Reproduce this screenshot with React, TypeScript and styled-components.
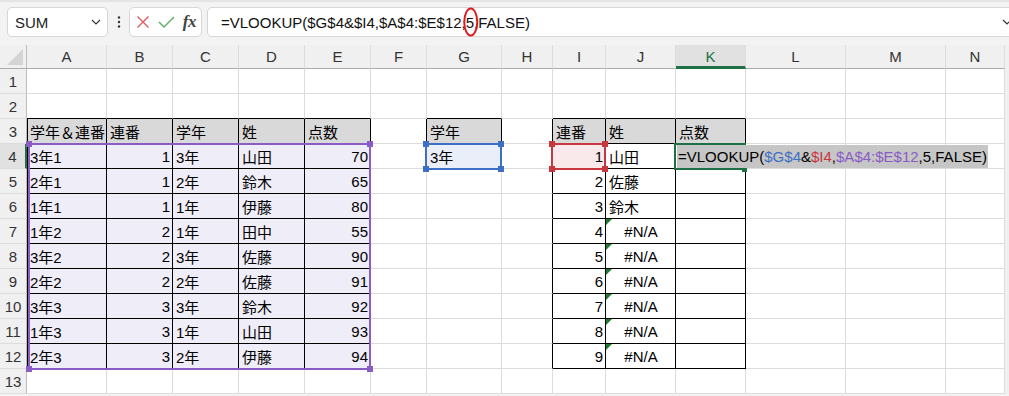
import React from 'react'
import styled, { createGlobalStyle } from 'styled-components'

const COLS = ['A','B','C','D','E','F','G','H','I','J','K','L','M','N']
const WIDTHS = [80,66,66,66,66,56,75,51,53,70,70,100,100,59]
const HEADER_W = 27
const HEAD_H = 24
const ROW_H = 25
const ROW_COUNT = 13
const ACTIVE_COL = 10
const ACTIVE_ROW = 4

const PURPLE = '#8a5cc5'
const BLUE = '#3d6fc6'
const RED = '#c8363f'
const GREEN = '#1e7145'

type Align = 'left' | 'right' | 'center'
type CellData = { t: string; a: Align; err?: boolean }

const data: Record<string, CellData> = {}
const put = (c: number, r: number, t: string, a: Align = 'left', err = false) => {
  data[`${c}-${r}`] = { t, a, err }
}

// 元データ
;['学年＆連番','連番','学年','姓','点数'].forEach((t, i) => put(i, 3, t))
const rows1 = [
  ['3年1','1','3年','山田','70'],
  ['2年1','1','2年','鈴木','65'],
  ['1年1','1','1年','伊藤','80'],
  ['1年2','2','1年','田中','55'],
  ['3年2','2','3年','佐藤','90'],
  ['2年2','2','2年','佐藤','91'],
  ['3年3','3','3年','鈴木','92'],
  ['1年3','3','1年','山田','93'],
  ['2年3','3','2年','伊藤','94'],
]
rows1.forEach((row, i) => row.forEach((t, c) => put(c, i + 4, t, c === 1 || c === 4 ? 'right' : 'left')))
put(6, 3, '学年')
put(6, 4, '3年')
put(8, 3, '連番'); put(9, 3, '姓'); put(10, 3, '点数')
for (let i = 1; i <= 9; i++) put(8, i + 3, String(i), 'right')
put(9, 4, '山田'); put(9, 5, '佐藤'); put(9, 6, '鈴木')
for (let r = 7; r <= 12; r++) put(9, r, '#N/A', 'center', true)

const tables = [
  { c1: 0, c2: 4, r1: 3, r2: 12 },
  { c1: 6, c2: 6, r1: 3, r2: 4 },
  { c1: 8, c2: 10, r1: 3, r2: 12 },
]
const inTable = (c: number, r: number) =>
  tables.some(t => c >= t.c1 && c <= t.c2 && r >= t.r1 && r <= t.r2)

const fillOf = (c: number, r: number) => {
  if (r === 3 && inTable(c, r)) return '#d9d9d9'
  if (c <= 4 && r >= 4 && r <= 12) return '#efedf7'
  if (c === 6 && r === 4) return '#e9eef8'
  if (c === 8 && r === 4) return '#f9e9ea'
  return '#fff'
}

const colStart = (i: number) => HEADER_W + WIDTHS.slice(0, i).reduce((s, w) => s + w, 0)
const rowStart = (r: number) => HEAD_H + ROW_H * (r - 1)

function rect(c1: number, r1: number, c2: number, r2: number) {
  let left = colStart(c1) - 2
  const right = colStart(c2 + 1)
  left = Math.max(left, HEADER_W + 1)
  const top = rowStart(r1) - 1
  const bottom = rowStart(r2 + 1) + 1
  return { left, top, width: right - left, height: bottom - top }
}

const GlobalStyle = createGlobalStyle`
  html, body { margin:0; padding:0; overflow:hidden; }
  body {
    background:#f3f3f3;
    font-family:"Liberation Sans","Noto Sans CJK JP",sans-serif;
  }
`

const Window = styled.div`
  width:1009px;
  height:396px;
  overflow:hidden;
  box-sizing:border-box;
  background:#f3f3f3;
  border-top:2px solid #e4e4e4;
`

const FormulaBar = styled.div`
  display:flex;
  align-items:center;
  height:30px;
  margin:5px 0 8px;
  padding-left:7px;
`

const NameBox = styled.div`
  width:101px;
  height:30px;
  box-sizing:border-box;
  display:flex;
  align-items:center;
  justify-content:space-between;
  padding:0 6px 0 7px;
  background:#fff;
  border:1px solid #d6d6d6;
  border-radius:5px;
  font-size:15px;
  color:#222;
`

const Dots = styled.div`
  width:21px;
  display:flex;
  justify-content:center;
`

const FxBox = styled.div`
  width:73px;
  height:30px;
  box-sizing:border-box;
  display:flex;
  align-items:center;
  justify-content:space-between;
  padding:0 5px 0 6px;
  background:#fff;
  border:1px solid #d6d6d6;
  border-radius:5px;
`

const Fx = styled.span`
  font-family:"Liberation Serif","DejaVu Serif",serif;
  font-style:italic;
  font-weight:bold;
  font-size:17px;
  color:#444;
  letter-spacing:-0.5px;
`

const FormulaInput = styled.div`
  flex:1;
  height:30px;
  box-sizing:border-box;
  margin-left:5px;
  margin-right:-14px;
  display:flex;
  align-items:center;
  padding:0 10px 0 13px;
  background:#fff;
  border:1px solid #d6d6d6;
  border-radius:5px;
  font-size:15px;
  color:#111;
  white-space:nowrap;
`

const FormulaText = styled.span`
  flex:1;
`

const Circled = styled.span`
  position:relative;
  &::after{
    content:'';
    position:absolute;
    left:50%;
    top:50%;
    width:15px;
    height:29px;
    transform:translate(-45%,-50%);
    box-sizing:border-box;
    border:2px solid #e3141c;
    border-radius:50%;
  }
`

const Sheet = styled.div`
  position:relative;
  display:grid;
  grid-template-columns:${HEADER_W}px ${WIDTHS.map(w => `${w}px`).join(' ')} 1fr;
  grid-template-rows:${HEAD_H}px repeat(${ROW_COUNT}, ${ROW_H}px);
  background:#fff;
`

const Corner = styled.div`
  background:#f0f0f0;
  border-right:1px solid #bdbdbd;
  border-bottom:1px solid #acacac;
  box-sizing:border-box;
  display:flex;
  align-items:flex-end;
  justify-content:flex-end;
  padding:0 3px 3px 0;
`

const ColHeader = styled.div<{ $active?: boolean }>`
  box-sizing:border-box;
  display:flex;
  align-items:center;
  justify-content:center;
  background:${p => (p.$active ? '#e1e1e1' : '#f0f0f0')};
  border-right:1px solid #dcdcdc;
  border-bottom:${p => (p.$active ? `3px solid ${GREEN}` : '1px solid #acacac')};
  padding-top:${p => (p.$active ? '2px' : '0')};
  font-size:15px;
  color:${p => (p.$active ? GREEN : '#333')};
`

const RowHeader = styled.div<{ $active?: boolean }>`
  box-sizing:border-box;
  display:flex;
  align-items:center;
  justify-content:center;
  background:${p => (p.$active ? '#e1e1e1' : '#f0f0f0')};
  border-right:${p => (p.$active ? `2px solid ${GREEN}` : '1px solid #bdbdbd')};
  border-bottom:1px solid #dcdcdc;
  font-size:15px;
  color:#333;
`

const Strip = styled.div`
  background:#f0f0f0;
`

const Cell = styled.div<{ $bg: string; $right: string; $bottom: string; $align: Align; $edge?: boolean }>`
  position:relative;
  box-sizing:border-box;
  display:flex;
  align-items:center;
  justify-content:${p => (p.$align === 'right' ? 'flex-end' : p.$align === 'center' ? 'center' : 'flex-start')};
  padding:0 2px 0 3px;
  background:${p => p.$bg};
  border-right:1px solid ${p => p.$right};
  border-bottom:1px solid ${p => p.$bottom};
  ${p => p.$edge && 'box-shadow:inset 1px 0 0 #000;'}
  font-size:15px;
  color:#000;
  white-space:nowrap;
  overflow:hidden;
`

const ErrorMark = styled.span`
  position:absolute;
  top:0;
  left:0;
  width:0;
  height:0;
  border-top:6px solid #1b7d2a;
  border-right:6px solid transparent;
`

const RangeBox = styled.div<{ $color: string }>`
  position:absolute;
  box-sizing:border-box;
  border:2px solid ${p => p.$color};
  pointer-events:none;
`

const Handle = styled.div<{ $color: string }>`
  position:absolute;
  width:6px;
  height:6px;
  background:${p => p.$color};
`

const EditText = styled.div`
  position:absolute;
  height:23px;
  display:flex;
  align-items:center;
  padding:0 1px;
  background:#c6c6c6;
  font-size:15px;
  color:#000;
  white-space:nowrap;
`

const Ref = styled.span<{ $color: string }>`
  color:${p => p.$color};
`

function Range({ c1, r1, c2, r2, color, handles = true }: { c1: number; r1: number; c2: number; r2: number; color: string; handles?: boolean }) {
  const b = rect(c1, r1, c2, r2)
  const corners = [
    [b.left + 1, b.top + 1],
    [b.left + b.width - 1, b.top + 1],
    [b.left + 1, b.top + b.height - 1],
    [b.left + b.width - 1, b.top + b.height - 1],
  ]
  return <>
    <RangeBox $color={color} style={{ left: b.left, top: b.top, width: b.width, height: b.height }} />
    {handles
      ? corners.map(([x, y], i) => <Handle key={i} $color={color} style={{ left: x - 3, top: y - 3 }} />)
      : <Handle $color={color} style={{ left: corners[3][0] - 3, top: corners[3][1] - 2, width: 5, height: 5 }} />}
  </>
}

function Chevron({ w = 10 }: { w?: number }) {
  return <svg width={w} height="6" viewBox="0 0 10 6">
    <polyline points="1,1 5,5 9,1" fill="none" stroke="#333" strokeWidth="1.2" />
  </svg>
}

export default function App() {
  const rows = Array.from({ length: ROW_COUNT }, (_, i) => i + 1)
  return <>
    <GlobalStyle />
    <Window>
      <FormulaBar>
        <NameBox>
          SUM
          <Chevron />
        </NameBox>
        <Dots>
          <svg width="4" height="12" viewBox="0 0 4 12">
            <circle cx="2" cy="1.5" r="1.2" fill="#333" />
            <circle cx="2" cy="6" r="1.2" fill="#333" />
            <circle cx="2" cy="10.5" r="1.2" fill="#333" />
          </svg>
        </Dots>
        <FxBox>
          <svg width="14" height="14" viewBox="0 0 14 14">
            <path d="M1.5 1.5 L12.5 12.5 M12.5 1.5 L1.5 12.5" stroke="#e05a5f" strokeWidth="1.4" fill="none" />
          </svg>
          <svg width="17" height="12" viewBox="0 0 17 12">
            <polyline points="1,6 6,11 16,1" stroke="#5aae62" strokeWidth="1.4" fill="none" />
          </svg>
          <Fx>fx</Fx>
        </FxBox>
        <FormulaInput>
          <FormulaText>
            =VLOOKUP($G$4&$I4,$A$4:$E$12,<Circled>5</Circled>,FALSE)
          </FormulaText>
          <Chevron />
        </FormulaInput>
      </FormulaBar>

      <Sheet>
        <Corner>
          <svg width="16" height="16" viewBox="0 0 16 16">
            <polygon points="16,0 16,16 0,16" fill="#d4d4d4" />
          </svg>
        </Corner>
        {COLS.map((c, i) => <ColHeader key={c} $active={i === ACTIVE_COL}>{c}</ColHeader>)}
        <Strip />

        {rows.map(r => <React.Fragment key={r}>
          <RowHeader $active={r === ACTIVE_ROW}>{r}</RowHeader>
          {COLS.map((_, c) => {
            const d = data[`${c}-${r}`]
            const right = inTable(c, r) || inTable(c + 1, r) ? '#000' : '#dcdcdc'
            const bottom = inTable(c, r) || inTable(c, r + 1) ? '#000' : '#dcdcdc'
            return <Cell
              key={c}
              $bg={fillOf(c, r)}
              $right={right}
              $bottom={bottom}
              $align={d ? d.a : 'left'}
              $edge={c === 0 && inTable(c, r)}
            >
              {d?.err && <ErrorMark />}
              {d?.t}
            </Cell>
          })}
          <Strip />
        </React.Fragment>)}

        <Range c1={0} r1={4} c2={4} r2={12} color={PURPLE} />
        <Range c1={6} r1={4} c2={6} r2={4} color={BLUE} />
        <Range c1={8} r1={4} c2={8} r2={4} color={RED} />
        <Range c1={ACTIVE_COL} r1={ACTIVE_ROW} c2={ACTIVE_COL} r2={ACTIVE_ROW} color={GREEN} handles={false} />
        <EditText style={{ left: colStart(ACTIVE_COL) + 1, top: rowStart(ACTIVE_ROW) + 1 }}>
          =VLOOKUP(<Ref $color={BLUE}>$G$4</Ref>&amp;<Ref $color={RED}>$I4</Ref>,<Ref $color={PURPLE}>$A$4:$E$12</Ref>,5,FALSE)
        </EditText>
      </Sheet>
    </Window>
  </>
}
